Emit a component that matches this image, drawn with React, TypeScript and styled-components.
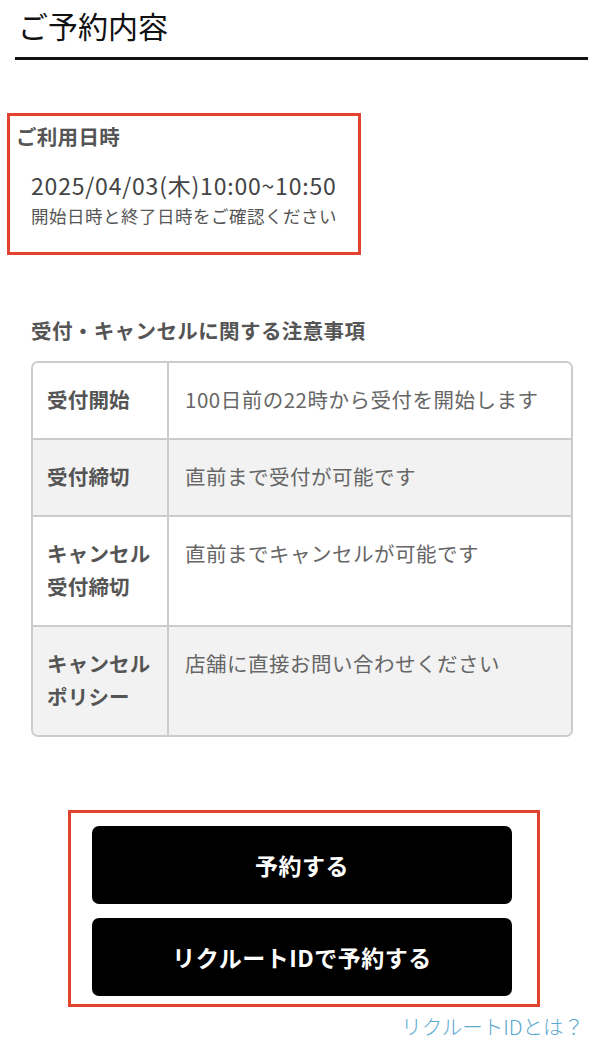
import React from "react";
import styled, { createGlobalStyle } from "styled-components";

const GlobalStyle = createGlobalStyle`
  html, body {
    margin: 0;
    padding: 0;
    background: #ffffff;
  }
  body {
    font-family: "Noto Sans CJK JP", "Noto Sans", sans-serif;
    -webkit-font-smoothing: antialiased;
  }
  * { box-sizing: border-box; }
`;

const Page = styled.div`
  width: 603px;
  min-height: 1057px;
  background: #fff;
  display: flex;
  flex-direction: column;
`;

const Title = styled.h1`
  margin: 0 15px;
  padding: 5px 3px 12px;
  font-size: 30px;
  line-height: 40px;
  font-weight: 400;
  color: #111;
  border-bottom: 3px solid #111;
`;

const Highlight = styled.div<{ $left: number; $width: number; $top: number; $pad: string }>`
  margin-left: ${(p) => p.$left}px;
  margin-top: ${(p) => p.$top}px;
  width: ${(p) => p.$width}px;
  border: 3px solid #e2432f;
  padding: ${(p) => p.$pad};
  display: flex;
  flex-direction: column;
`;

const Label = styled.div`
  font-size: 20.5px;
  letter-spacing: 0.3px;
  line-height: 28px;
  font-weight: 700;
  color: #555;
`;

const DateText = styled.div`
  margin-top: 20px;
  padding-left: 15px;
  font-size: 23px;
  letter-spacing: 0.8px;
  line-height: 30px;
  color: #444;
`;

const Note = styled.div`
  margin-top: 4px;
  padding-left: 15px;
  font-size: 17.5px;
  letter-spacing: 0.5px;
  line-height: 24px;
  color: #555;
`;

const Section = styled.section`
  margin: 61px 30px 0 31px;
  display: flex;
  flex-direction: column;
`;

const SectionHeading = styled.h2`
  margin: 0;
  font-size: 20.5px;
  letter-spacing: 0.4px;
  line-height: 28px;
  font-weight: 700;
  color: #555;
`;

const Table = styled.div`
  margin-top: 17px;
  border: 2px solid #cccccc;
  border-radius: 7px;
  overflow: hidden;
  display: flex;
  flex-direction: column;
`;

const Row = styled.div<{ $shaded: boolean }>`
  display: grid;
  grid-template-columns: 136px 1fr;
  background: ${(p) => (p.$shaded ? "#f2f2f2" : "#ffffff")};
  & + & {
    border-top: 2px solid #cccccc;
  }
`;

const HeadCell = styled.div`
  padding: 20px 8px 22px 14px;
  border-right: 2px solid #cccccc;
  font-size: 20.5px;
  letter-spacing: 0.2px;
  line-height: 33px;
  font-weight: 700;
  color: #555;
`;

const ValueCell = styled.div`
  padding: 20px 10px 22px 16px;
  font-size: 20.5px;
  letter-spacing: 0.5px;
  line-height: 33px;
  font-weight: 400;
  color: #666;
`;

const Buttons = styled.div`
  display: flex;
  flex-direction: column;
  align-items: center;
  gap: 14px;
`;

const ActionButton = styled.button`
  width: 420px;
  height: 78px;
  border: none;
  border-radius: 7px;
  background: #000;
  color: #fff;
  font-family: "Noto Sans CJK JP", "Noto Sans", sans-serif;
  font-size: 23px;
  font-weight: 700;
  letter-spacing: 0.5px;
  cursor: pointer;
`;

const LinkRow = styled.div`
  margin-top: 5px;
  padding-right: 19px;
  display: flex;
  justify-content: flex-end;
`;

const HelpLink = styled.a`
  font-size: 20.5px;
  line-height: 28px;
  color: #5aa8cf;
  text-decoration: none;
  font-weight: 300;
`;

const rows: { head: string[]; value: string }[] = [
  { head: ["受付開始"], value: "100日前の22時から受付を開始します" },
  { head: ["受付締切"], value: "直前まで受付が可能です" },
  { head: ["キャンセル", "受付締切"], value: "直前までキャンセルが可能です" },
  { head: ["キャンセル", "ポリシー"], value: "店舗に直接お問い合わせください" },
];

export default function App() {
  return (
    <>
      <GlobalStyle />
      <Page>
        <Title>ご予約内容</Title>

        <Highlight $left={7} $width={354} $top={53} $pad="6px 6px 24px 6px">
          <Label>ご利用日時</Label>
          <DateText>2025/04/03(木)10:00~10:50</DateText>
          <Note>開始日時と終了日時をご確認ください</Note>
        </Highlight>

        <Section>
          <SectionHeading>受付・キャンセルに関する注意事項</SectionHeading>
          <Table>
            {rows.map((r, i) => (
              <Row key={i} $shaded={i % 2 === 1}>
                <HeadCell>
                  {r.head.map((h, j) => (
                    <div key={j}>{h}</div>
                  ))}
                </HeadCell>
                <ValueCell>{r.value}</ValueCell>
              </Row>
            ))}
          </Table>
        </Section>

        <Highlight $left={68} $width={472} $top={73} $pad="13px 4px 8px 0">
          <Buttons>
            <ActionButton>予約する</ActionButton>
            <ActionButton>リクルートIDで予約する</ActionButton>
          </Buttons>
        </Highlight>

        <LinkRow>
          <HelpLink href="#">リクルートIDとは？</HelpLink>
        </LinkRow>
      </Page>
    </>
  );
}
